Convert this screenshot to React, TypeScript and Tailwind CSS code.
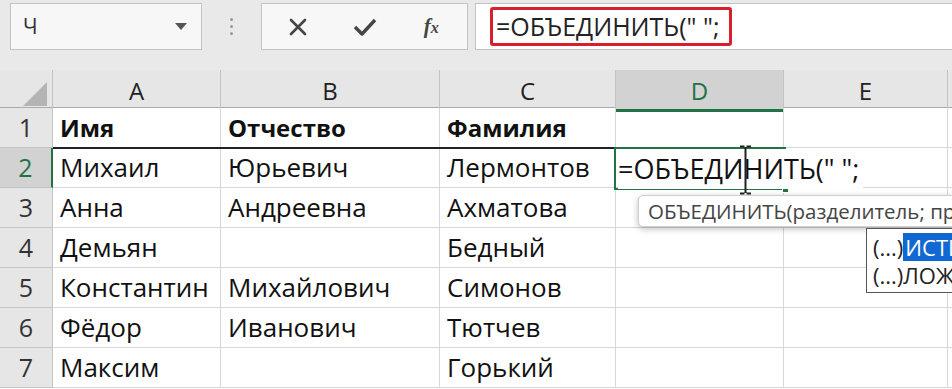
import React from 'react';

const font = { fontFamily: '"Open Sans", "Noto Sans", sans-serif' };

const cols = ['A', 'B', 'C', 'D', 'E'];

const rows: { n: number; a: string; b: string; c: string; bold?: boolean }[] = [
    { n: 1, a: 'Имя', b: 'Отчество', c: 'Фамилия', bold: true },
    { n: 2, a: 'Михаил', b: 'Юрьевич', c: 'Лермонтов' },
    { n: 3, a: 'Анна', b: 'Андреевна', c: 'Ахматова' },
    { n: 4, a: 'Демьян', b: '', c: 'Бедный' },
    { n: 5, a: 'Константин', b: 'Михайлович', c: 'Симонов' },
    { n: 6, a: 'Фёдор', b: 'Иванович', c: 'Тютчев' },
    { n: 7, a: 'Максим', b: '', c: 'Горький' },
];

const gridCols = 'grid grid-cols-[53px_168px_219px_176px_168px_164px_1fr]';

const Toolbar = () => (
    <div className="flex h-[70px] items-start bg-[#e9e9e9] pt-[3px]">
        <div className="ml-[10px] flex h-[47px] w-[192px] items-center justify-between border border-[#c3c3c3] bg-[#f7f7f7] pl-[12px] pr-[14px]">
            <span className="text-[21px] text-[#333]">Ч</span>
            <svg width="12" height="7" viewBox="0 0 12 7">
                <path d="M0 0h12L6 7z" fill="#555" />
            </svg>
        </div>
        <div className="flex h-[47px] w-[59px] flex-col items-center justify-center gap-[4px]">
            <span className="h-[3px] w-[3px] rounded-full bg-[#9a9a9a]" />
            <span className="h-[3px] w-[3px] rounded-full bg-[#9a9a9a]" />
            <span className="h-[3px] w-[3px] rounded-full bg-[#9a9a9a]" />
        </div>
        <div className="flex h-[47px] w-[207px] items-center border border-[#c3c3c3] bg-[#f7f7f7]">
            <div className="flex w-[72px] justify-center">
                <svg width="20" height="20" viewBox="0 0 20 20">
                    <path d="M3 3L17 17M17 3L3 17" stroke="#454545" strokeWidth="2.6" strokeLinecap="round" />
                </svg>
            </div>
            <div className="flex w-[62px] justify-center">
                <svg width="24" height="20" viewBox="0 0 24 20">
                    <path d="M2 10l7 7L22 3" stroke="#454545" strokeWidth="3.4" fill="none" strokeLinejoin="round" />
                </svg>
            </div>
            <div className="flex w-[72px] justify-center">
                <span className="text-[21px] italic font-bold text-[#454545]" style={{ fontFamily: '"Liberation Serif", serif' }}>
                    f<span className="text-[16px]">x</span>
                </span>
            </div>
        </div>
        <div className="ml-[7px] flex h-[47px] flex-1 items-center border border-r-0 border-[#c3c3c3] bg-white pl-[14px]">
            <div className="flex h-[39px] items-center rounded-[3px] border-[3px] border-[#d6212b] pl-[3px] pr-[9px]">
                <span className="text-[25px] text-[#222] whitespace-pre">=ОБЪЕДИНИТЬ(" ";</span>
            </div>
        </div>
    </div>
);

const HeaderRow = () => (
    <div className={`${gridCols} h-[38px] bg-[#e6e6e6] border-b border-[#ababab]`}>
        <div className="flex items-end justify-end border-r border-[#c3c3c3] pb-[6px] pr-[5px]">
            <svg width="24" height="24" viewBox="0 0 24 24">
                <path d="M24 0V24H0z" fill="#b4b4b4" />
            </svg>
        </div>
        {cols.map((c) => (
            <div
                key={c}
                className={
                    c === 'D'
                        ? 'flex items-center justify-center border-r border-[#c3c3c3] border-b-[3px] border-b-[#217346] bg-[#d2d2d2] pt-[3px] text-[24px] text-[#217346]'
                        : 'flex items-center justify-center border-r border-[#c3c3c3] text-[24px] text-[#222]'
                }
            >
                {c}
            </div>
        ))}
        <div />
    </div>
);

const Row = ({ r }: { r: (typeof rows)[number] }) => {
    const active = r.n === 2;
    const cell = `flex items-center border-r border-b border-[#d6d6d6] pl-[7px] text-[#111] whitespace-nowrap overflow-hidden ${r.bold ? 'font-bold text-[24px]' : 'text-[26px]'}`;
    return (
        <div className={`${gridCols} h-[40px] bg-white`}>
            <div
                className={
                    active
                        ? 'flex items-center justify-center border-b border-r-[2px] border-[#c3c3c3] border-r-[#217346] bg-[#d2d2d2] text-[25px] text-[#217346]'
                        : 'flex items-center justify-center border-b border-r border-[#c3c3c3] bg-[#e6e6e6] text-[25px] text-[#333]'
                }
            >
                {r.n}
            </div>
            <div className={cell}>{r.a}</div>
            <div className={cell}>{r.b}</div>
            <div className={cell}>{r.c}</div>
            <div className="border-r border-b border-[#d6d6d6]" />
            <div className="border-r border-b border-[#d6d6d6]" />
            <div className="border-b border-[#d6d6d6]" />
        </div>
    );
};

const App = () => {
    return (
        <div className="relative h-[389px] w-[952px] overflow-hidden bg-white" style={font}>
            <Toolbar />
            <HeaderRow />
            {rows.map((r) => (
                <Row key={r.n} r={r} />
            ))}

            {/* dark line under row 1 */}
            <div className="absolute left-[53px] top-[147px] h-[2px] w-[562px] bg-[#222]" />

            {/* active cell D2 in edit mode */}
            <div className="absolute left-[614px] top-[147px] h-[43px] w-[172px] border-[2px] border-[#217346]" />
            <div className="absolute left-[782px] top-[186px] h-[7px] w-[7px] bg-[#217346] border border-white" />
            <div className="absolute left-[618px] top-[149px] flex h-[40px] items-center bg-white pr-[4px] text-[27px] text-[#111] whitespace-pre">
                =ОБЪЕДИНИТЬ(" ";
            </div>

            {/* I-beam cursor */}
            <svg className="absolute left-[739px] top-[145px]" width="13" height="50" viewBox="0 0 13 50">
                <path d="M1 1.5h4.5M7.5 1.5H12M6.5 2V48M1 48.5h4.5M7.5 48.5H12" stroke="#222" strokeWidth="2" />
            </svg>

            {/* function tooltip */}
            <div className="absolute left-[638px] top-[195px] flex h-[32px] w-[360px] items-center rounded-[5px] border border-[#cfcfcf] bg-white pl-[9px] text-[20.5px] text-[#444] whitespace-nowrap shadow-[0_2px_6px_rgba(0,0,0,0.25)]">
                ОБЪЕДИНИТЬ(разделитель; пропускать_пустые; текст1; ...)
            </div>

            {/* autocomplete list */}
            <div className="absolute left-[866px] top-[228px] h-[65px] w-[120px] border border-[#555] bg-white pl-[6px] pt-[4px] text-[22px] leading-[28px] text-[#222] whitespace-nowrap">
                <div className="flex">
                    <span>(...)</span>
                    <span className="bg-[#1268d3] pl-[2px] text-white">ИСТИНА</span>
                </div>
                <div>(...)ЛОЖЬ</div>
            </div>
        </div>
    );
};

export default App;
